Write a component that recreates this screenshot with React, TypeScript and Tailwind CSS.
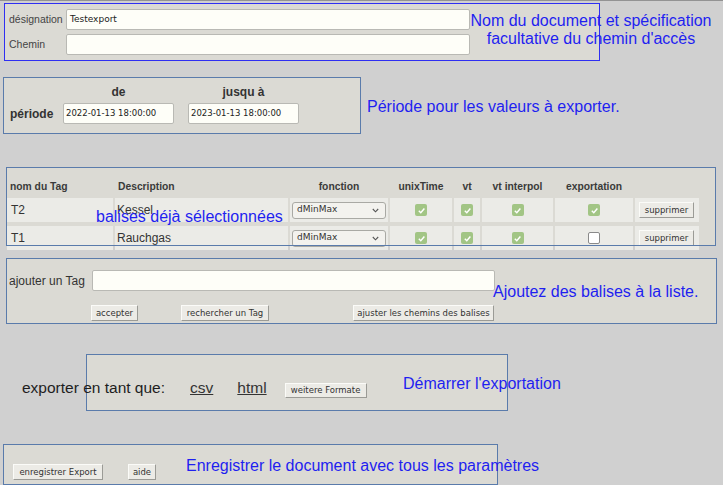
import React from "react";

const LS = "font-['Liberation_Sans',Arial,sans-serif]";
const DV = "font-['DejaVu_Sans',sans-serif]";

function Btn({ children, className = "" }: { children: React.ReactNode; className?: string }) {
  return (
    <div
      className={`h-[16px] flex items-center justify-center bg-[#ecebe6] border border-t-[#fbfbf8] border-l-[#fbfbf8] border-b-[#9b9b96] border-r-[#9b9b96] text-[8.5px] leading-none text-[#333] whitespace-nowrap font-['DejaVu_Sans',sans-serif] ${className}`}
    >
      {children}
    </div>
  );
}

function Check({ on }: { on: boolean }) {
  return on ? (
    <div className="w-[12px] h-[12px] rounded-[2px] bg-[#a2c585] flex items-center justify-center">
      <svg width="9" height="9" viewBox="0 0 10 10">
        <path d="M2 5.3 L4.2 7.4 L8.2 2.8" fill="none" stroke="white" strokeWidth="1.6" />
      </svg>
    </div>
  ) : (
    <div className="w-[12px] h-[12px] rounded-[2px] bg-white border border-[#8a8a8a]" />
  );
}

function Select() {
  return (
    <div
      className={`ml-[2px] w-[94px] h-[17px] rounded-[3px] border border-[#a9a9a4] bg-[#f3f2ee] flex items-center justify-between pl-[4px] pr-[6px] text-[9px] text-[#333] ${DV}`}
    >
      <span>dMinMax</span>
      <svg width="7" height="5" viewBox="0 0 7 5">
        <path d="M0.8 1 L3.5 3.8 L6.2 1" fill="none" stroke="#555" strokeWidth="1.1" />
      </svg>
    </div>
  );
}

function Row({ tag, desc, exp }: { tag: string; desc: string; exp: boolean }) {
  const cell = "h-[24px] bg-[#ebebe7] flex items-center";
  return (
    <>
      <div className={`${cell} pl-[4px] text-[12px] text-[#333]`}>{tag}</div>
      <div className={`${cell} pl-[2px] text-[12px] text-[#333]`}>{desc}</div>
      <div className={cell}>
        <Select />
      </div>
      <div className={`${cell} justify-center`}>
        <Check on />
      </div>
      <div className={`${cell} justify-center`}>
        <Check on />
      </div>
      <div className={`${cell} justify-center`}>
        <Check on />
      </div>
      <div className={`${cell} justify-center`}>
        <Check on={exp} />
      </div>
      <div className={`${cell} pl-[4px]`}>
        <Btn className="w-[55px]">supprimer</Btn>
      </div>
    </>
  );
}

export default function App() {
  const ann = "absolute text-[16px] leading-[18px] text-[#1f1ff0] whitespace-nowrap font-['Liberation_Sans',Arial,sans-serif]";
  const input = "bg-[#fefef8] border border-[#b9b9b4] rounded-[2px] flex items-center";
  return (
    <div className={`relative w-[723px] h-[485px] overflow-hidden bg-[#d0d0d0] ${LS}`}>
      <div className="h-[1px] bg-[#939393]" />
      <div className="flex flex-col">
        {/* Panel 1 */}
        <div className="mt-[2px] ml-[4px] w-[596px] h-[58px] bg-[#dbdad4] border border-[#2f2ff2] pt-[5px] flex flex-col gap-[4px]">
          <div className="flex items-center">
            <div className="w-[61px] pl-[4px] text-[10.5px] text-[#444]">désignation</div>
            <div className={`${input} w-[404px] h-[21px] pl-[3px] text-[9px] text-[#222] ${DV}`}>Testexport</div>
          </div>
          <div className="flex items-center">
            <div className="w-[61px] pl-[4px] text-[10.5px] text-[#444]">Chemin</div>
            <div className={`${input} w-[404px] h-[21px]`} />
          </div>
        </div>

        {/* Panel 2 */}
        <div className="mt-[16px] ml-[3px] w-[358px] h-[57px] bg-[#dbdad4] border border-[#5a7bab] pt-[7px]">
          <div className="grid grid-cols-[45px_111px_111px] gap-x-[14px] gap-y-[4px] items-center">
            <div />
            <div className="h-[14px] leading-[14px] text-center text-[12px] font-bold text-[#333]">de</div>
            <div className="h-[14px] leading-[14px] text-center text-[12px] font-bold text-[#333]">jusqu à</div>
            <div className="pl-[6px] text-[12px] font-bold text-[#333] whitespace-nowrap">période</div>
            <div className={`${input} h-[21px] pl-[2px] text-[8.5px] text-[#222] ${DV}`}>2022-01-13 18:00:00</div>
            <div className={`${input} h-[21px] pl-[2px] text-[8.5px] text-[#222] ${DV}`}>2023-01-13 18:00:00</div>
          </div>
        </div>

        {/* Panel 3 */}
        <div className="relative mt-[33px] ml-[6px] w-[710px] h-[79px] bg-[#dbdad4] pt-[13px] pl-[1px]">
          <div className="grid grid-cols-[106px_173px_98px_62px_26px_71px_78px_64px] gap-x-[2px] gap-y-[4px]">
            <div className="h-[14px] leading-[14px] pl-[3px] text-[10.3px] font-bold text-[#3a3a3a]">nom du Tag</div>
            <div className="h-[14px] leading-[14px] pl-[3px] text-[10.3px] font-bold text-[#3a3a3a]">Description</div>
            <div className="h-[14px] leading-[14px] text-center text-[10.3px] font-bold text-[#3a3a3a]">fonction</div>
            <div className="h-[14px] leading-[14px] text-center text-[10.3px] font-bold text-[#3a3a3a]">unixTime</div>
            <div className="h-[14px] leading-[14px] text-center text-[10.3px] font-bold text-[#3a3a3a]">vt</div>
            <div className="h-[14px] leading-[14px] text-center text-[10.3px] font-bold text-[#3a3a3a] whitespace-nowrap">vt interpol</div>
            <div className="h-[14px] leading-[14px] text-center text-[10.3px] font-bold text-[#3a3a3a]">exportation</div>
            <div />
            <Row tag="T2" desc="Kessel" exp />
            <Row tag="T1" desc="Rauchgas" exp={false} />
          </div>
          <div className="absolute inset-0 border border-[#5a7bab] pointer-events-none z-10" />
        </div>

        {/* Panel 4 */}
        <div className="mt-[12px] ml-[6px] w-[711px] h-[66px] bg-[#dbdad4] border border-[#5a7bab] pt-[11px]">
          <div className="flex items-center">
            <div className="w-[85px] pl-[2px] text-[12px] text-[#333]">ajouter un Tag</div>
            <div className={`${input} w-[403px] h-[21px]`} />
          </div>
          <div className="flex mt-[14px]">
            <Btn className="ml-[84px] w-[47px]">accepter</Btn>
            <Btn className="ml-[43px] w-[88px]">rechercher un Tag</Btn>
            <Btn className="ml-[84px] w-[141px]">ajuster les chemins des balises</Btn>
          </div>
        </div>

        {/* Panel 5 */}
        <div className="relative mt-[30px] h-[57px]">
          <div className="absolute left-[86px] top-0 w-[422px] h-[57px] bg-[#dbdad4] border border-[#5a7bab]" />
          <div className="relative flex items-start pt-[25px] pl-[22px] text-[15.5px] leading-[18px]">
            <span className="text-[#1e1e1e]">exporter en tant que:</span>
            <span className="ml-[25px] underline text-[#333]">csv</span>
            <span className="ml-[24px] underline text-[#333]">html</span>
            <Btn className="ml-[18px] mt-[4px] w-[82px] !h-[15px]">weitere Formate</Btn>
          </div>
        </div>

        {/* Panel 6 */}
        <div className="mt-[33px] ml-[3px] w-[495px] h-[41px] bg-[#dbdad4] border border-[#5a7bab] pt-[19px] pl-[9px] flex items-start">
          <Btn className="w-[90px]">enregistrer Export</Btn>
          <Btn className="ml-[25px] w-[28px]">aide</Btn>
        </div>
      </div>

      {/* annotations */}
      <div className={`${ann} left-[466px] top-[12px] w-[250px] text-center !leading-[17.6px] !whitespace-normal`}>
        Nom du document et spécification
        <br />
        facultative du chemin d'accès
      </div>
      <div className={`${ann} left-[367px] top-[98px]`}>Période pour les valeurs à exporter.</div>
      <div className={`${ann} left-[96px] top-[208px] z-20`}>balises déjà sélectionnées</div>
      <div className={`${ann} left-[493px] top-[283px]`}>Ajoutez des balises à la liste.</div>
      <div className={`${ann} left-[403px] top-[375px]`}>Démarrer l'exportation</div>
      <div className={`${ann} left-[186px] top-[457px]`}>Enregistrer le document avec tous les paramètres</div>
    </div>
  );
}
